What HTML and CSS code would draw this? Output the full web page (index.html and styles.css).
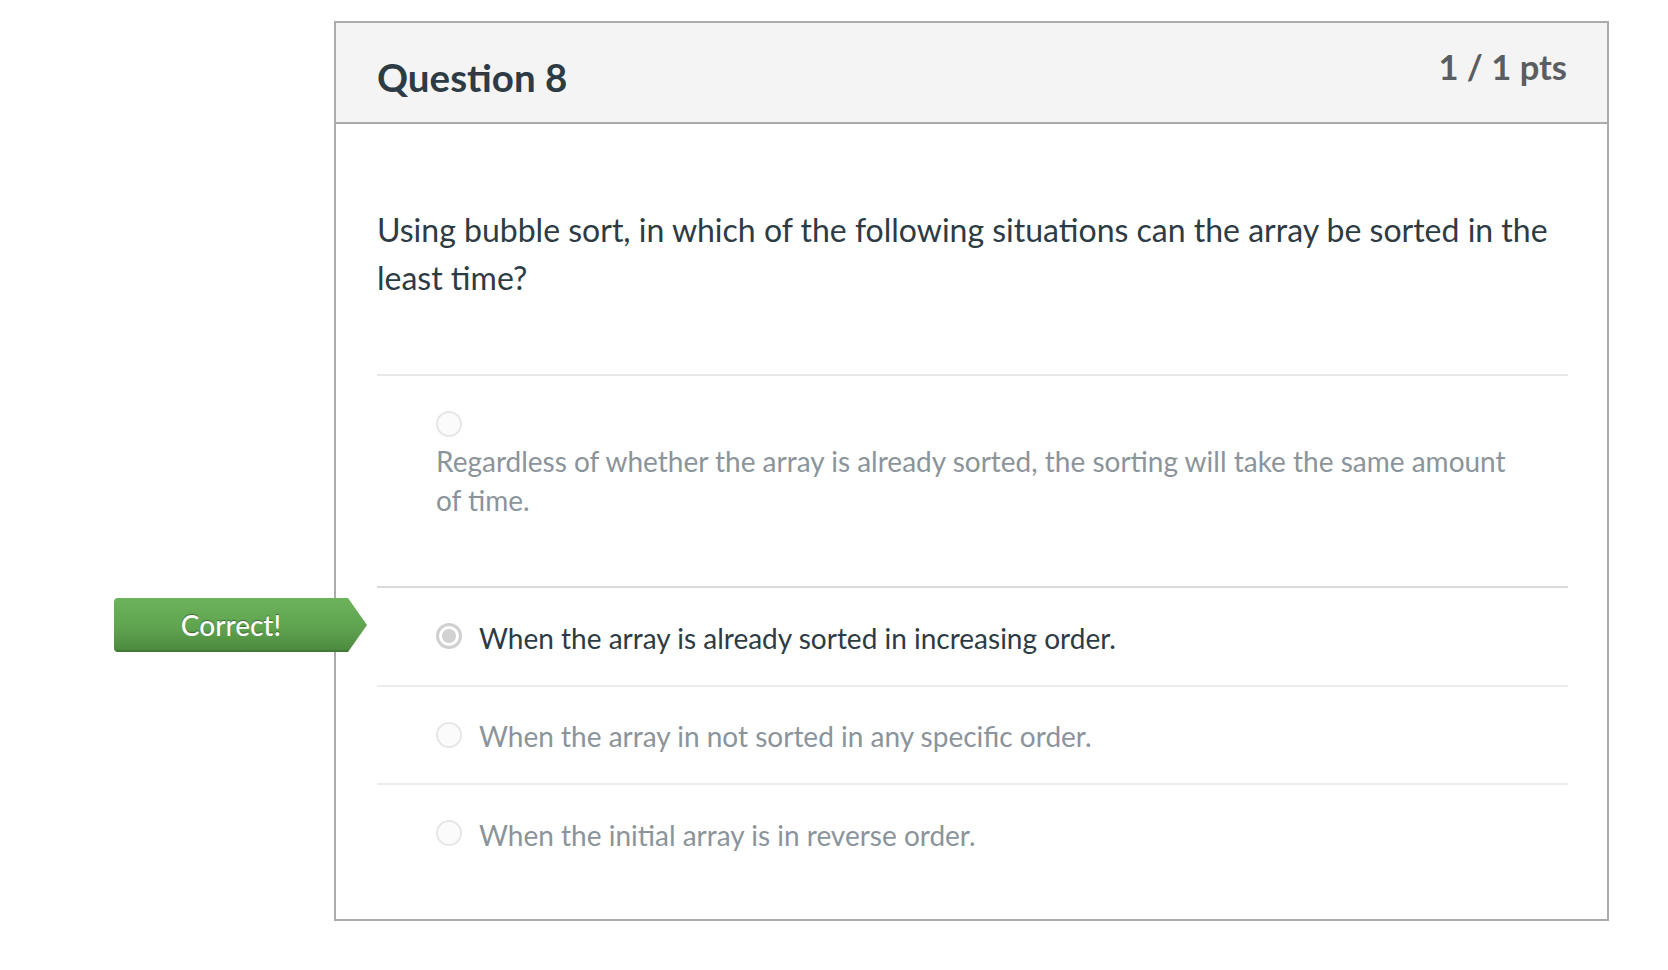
FILE: index.html
```html
<!DOCTYPE html>
<html lang="en">
<head>
<meta charset="utf-8">
<title>Question 8</title>
<link rel="stylesheet" href="styles.css">
</head>
<body>
<div class="card">
  <div class="card-header">
    <h2 class="q-name">Question 8</h2>
    <div class="q-points">1 / 1 pts</div>
  </div>
  <div class="card-body">
    <p class="q-text">Using bubble sort, in which of the following situations can the array be sorted in the least time?</p>
    <div class="answers">
      <div class="answer answer-block">
        <span class="radio"></span>
        <div class="answer-html">Regardless of whether the array is already sorted, the sorting will take the same amount of time.</div>
      </div>
      <div class="answer answer-inline answer-correct">
        <div class="badge">Correct!</div>
        <span class="radio radio-selected"></span>
        <span class="answer-text">When the array is already sorted in increasing order.</span>
      </div>
      <div class="answer answer-inline">
        <span class="radio"></span>
        <span class="answer-text">When the array in not sorted in any specific order.</span>
      </div>
      <div class="answer answer-inline">
        <span class="radio"></span>
        <span class="answer-text">When the initial array is in reverse order.</span>
      </div>
    </div>
  </div>
</div>
</body>
</html>
```

FILE: styles.css
```css
* {
  box-sizing: border-box;
}

body {
  margin: 0;
  background: #ffffff;
  font-family: Lato, "Open Sans", "Liberation Sans", sans-serif;
  color: #2d3b45;
}

.card {
  margin: 21px 0 0 334px;
  width: 1275px;
  border: 2px solid #ababab;
  background: #ffffff;
}

.card-header {
  height: 101px;
  display: flex;
  justify-content: space-between;
  align-items: flex-start;
  padding: 25px 40px 0 41px;
  background: #f4f4f4;
  border-bottom: 2px solid #ababab;
}

.q-name {
  margin: 5px 0 0 0;
  font-size: 38.5px;
  line-height: 48px;
  font-weight: 700;
  color: #2d3b45;
}

.q-points {
  margin-top: -1px;
  font-size: 34.5px;
  line-height: 40px;
  font-weight: 700;
  color: #5a5e62;
}

.card-body {
  padding: 82px 39px 37px 41px;
}

.q-text {
  margin: 0;
  font-size: 32px;
  line-height: 48px;
  color: #2d3b45;
}

.answers {
  margin-top: 72px;
}

.answer {
  position: relative;
  border-top: 2px solid #ececec;
  padding-left: 59px;
}

.answer-block {
  border-top-color: #e8e8e8;
  padding-top: 35px;
  padding-bottom: 66px;
}

.answer-block .radio {
  display: block;
}

.answer-html {
  margin-top: 5px;
  padding-right: 50px;
  font-size: 28px;
  line-height: 39px;
  color: #8b949b;
}

.answer-inline {
  height: 98.5px;
  display: flex;
  align-items: center;
  gap: 17px;
}

.answer-correct {
  border-top-color: #dadada;
}

.answer-text {
  font-size: 28px;
  line-height: 42px;
  color: #8b949b;
  padding-top: 3px;
}

.answer-correct .answer-text {
  color: #2d3b45;
}

.radio {
  width: 26px;
  height: 26px;
  flex: 0 0 26px;
  border-radius: 50%;
  border: 2px solid #e6e6e6;
  background: #fbfbfb;
}

.radio-selected {
  border: 3px solid #d0d0d0;
  background: radial-gradient(circle, #d2d2d2 0, #d2d2d2 6.5px, #ffffff 7.5px);
}

.badge {
  position: absolute;
  left: -263px;
  top: 10px;
  width: 253px;
  height: 54px;
  padding-right: 19px;
  display: flex;
  align-items: center;
  justify-content: center;
  border-radius: 4px 0 0 4px;
  background: linear-gradient(#6cb45c 0%, #5fa34f 55%, #4e8c40 94%, #3d7231 100%);
  clip-path: polygon(0 0, 234px 0, 253px 50%, 234px 100%, 0 100%);
  color: #ffffff;
  font-size: 28px;
  line-height: 34px;
  font-weight: 500;
  text-shadow: 0 -1px 1px rgba(0, 0, 0, 0.4);
}
```
